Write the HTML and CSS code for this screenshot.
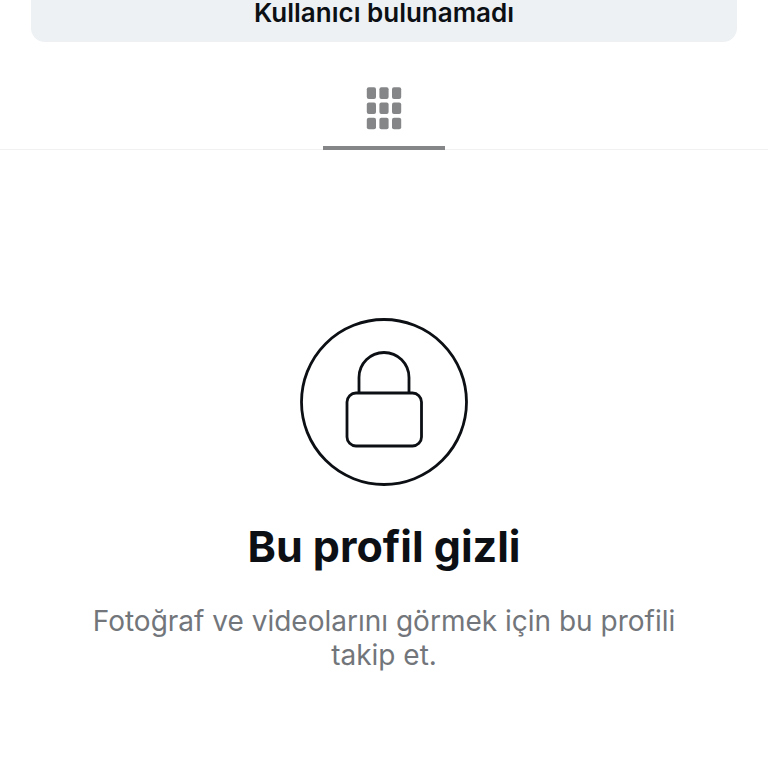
FILE: index.html
```html
<!DOCTYPE html>
<html lang="tr">
<head>
    <meta charset="UTF-8">
    <meta name="viewport" content="width=device-width, initial-scale=1.0">
    <title>Bu profil gizli</title>
    <link rel="stylesheet" href="styles.css">
</head>
<body>
    <div class="actions">
        <button type="button" class="btn">Kullanıcı bulunamadı</button>
    </div>

    <nav class="tabs">
        <button type="button" class="tab" aria-label="Gönderiler">
            <svg class="grid-icon" width="36" height="44" viewBox="0 0 36 44" fill="currentColor">
                <rect x="0.8" y="0.3" width="9.2" height="11.6" rx="2"/>
                <rect x="13.4" y="0.3" width="9.2" height="11.6" rx="2"/>
                <rect x="26" y="0.3" width="9.2" height="11.6" rx="2"/>
                <rect x="0.8" y="15.5" width="9.2" height="11.6" rx="2"/>
                <rect x="13.4" y="15.5" width="9.2" height="11.6" rx="2"/>
                <rect x="26" y="15.5" width="9.2" height="11.6" rx="2"/>
                <rect x="0.8" y="30.7" width="9.2" height="11.6" rx="2"/>
                <rect x="13.4" y="30.7" width="9.2" height="11.6" rx="2"/>
                <rect x="26" y="30.7" width="9.2" height="11.6" rx="2"/>
            </svg>
        </button>
    </nav>

    <main class="private">
        <svg class="lock-icon" width="168" height="168" viewBox="0 0 168 168" fill="none" stroke="currentColor" stroke-width="2.8">
            <circle cx="84" cy="84" r="82.5"/>
            <path d="M59 75V59.5a25 25 0 0 1 50 0V75"/>
            <rect x="47" y="75" width="74.5" height="53" rx="9"/>
        </svg>
        <h1>Bu profil gizli</h1>
        <p>Fotoğraf ve videolarını görmek için bu profili takip et.</p>
    </main>
</body>
</html>
```

FILE: styles.css
```css
body {
    margin: 0;
    background-color: #fff;
    color: #0c1014;
    font-family: Inter, "Liberation Sans", sans-serif;
}

.actions {
    padding: 0 31px;
}

.btn {
    display: block;
    width: 100%;
    padding: 0 0 16px;
    border: none;
    border-radius: 0 0 14px 14px;
    background-color: #edf1f4;
    color: inherit;
    font-family: inherit;
    font-size: 26px;
    font-weight: 600;
    line-height: 26px;
    cursor: pointer;
}

.tabs {
    display: flex;
    justify-content: center;
    margin-top: 45px;
    border-bottom: 1px solid #f1f1f2;
}

.tab {
    width: 122px;
    margin-bottom: -1px;
    padding: 0 0 15px;
    border: none;
    border-bottom: 4px solid #858688;
    background: none;
    color: #858688;
    cursor: pointer;
}

.grid-icon,
.lock-icon {
    display: block;
    margin: 0 auto;
}

.private {
    padding: 168px 80px 0;
    text-align: center;
}

.private h1 {
    margin: 30px 0 0;
    font-size: 43px;
    font-weight: 700;
    line-height: 60px;
}

.private p {
    margin: 28px 0 0;
    color: #72767b;
    font-size: 28px;
    line-height: 34px;
}
```
